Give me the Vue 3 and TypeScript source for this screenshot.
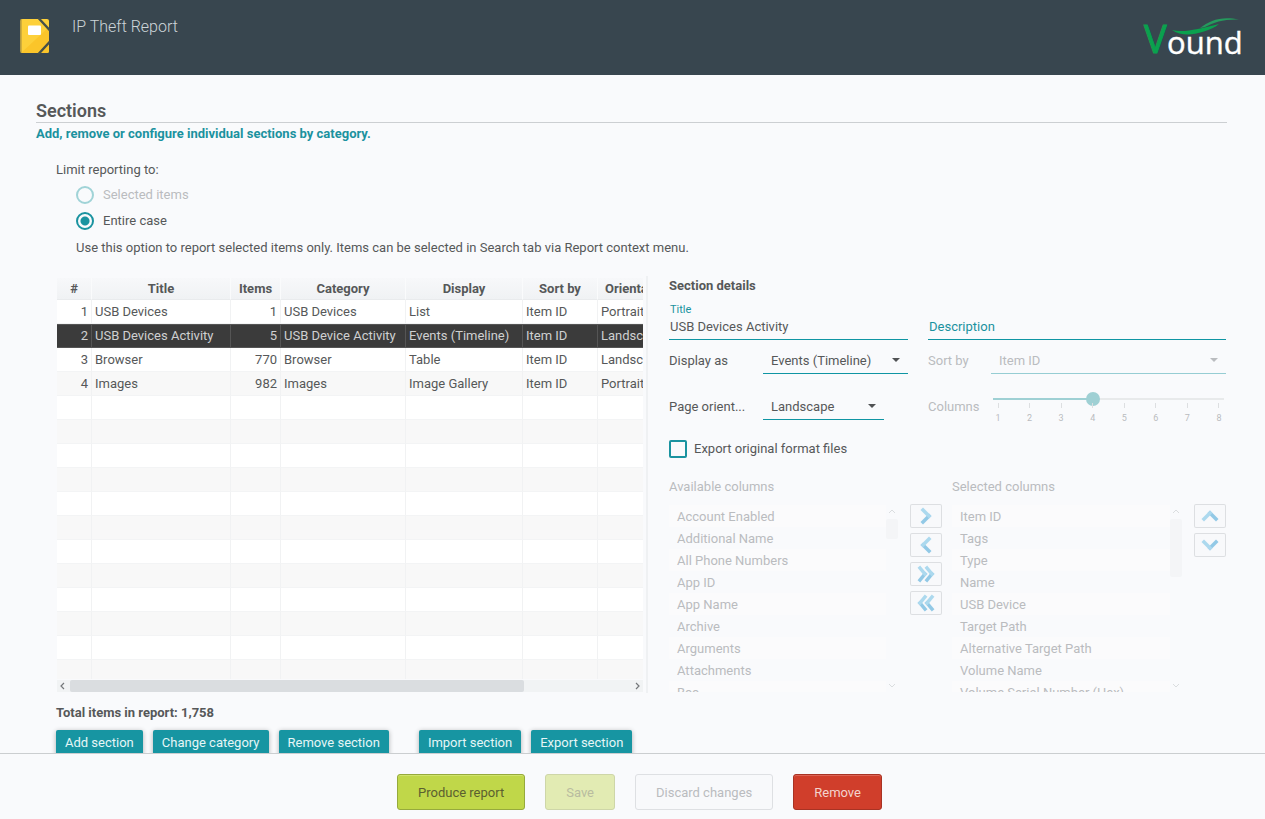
<script setup lang="ts">
import { ref, computed } from 'vue'

interface Section {
  title: string
  items: number
  category: string
  display: string
  sortBy: string
  orientation: string
}

const sections: Section[] = [
  { title: 'USB Devices', items: 1, category: 'USB Devices', display: 'List', sortBy: 'Item ID', orientation: 'Portrait' },
  { title: 'USB Devices Activity', items: 5, category: 'USB Device Activity', display: 'Events (Timeline)', sortBy: 'Item ID', orientation: 'Landscape' },
  { title: 'Browser', items: 770, category: 'Browser', display: 'Table', sortBy: 'Item ID', orientation: 'Landscape' },
  { title: 'Images', items: 982, category: 'Images', display: 'Image Gallery', sortBy: 'Item ID', orientation: 'Portrait' },
]
const blankRows = 12
const selected = ref(1)
const total = computed(() => sections.reduce((sum, s) => sum + s.items, 0).toLocaleString('en-US'))

const scope = ref('case')
const title = ref('USB Devices Activity')
const description = ref('')
const display = ref('Events (Timeline)')
const orientation = ref('Landscape')
const sortBy = ref('Item ID')
const columns = ref(4)
const exportOriginal = ref(false)

const available = ['Account Enabled', 'Additional Name', 'All Phone Numbers', 'App ID', 'App Name', 'Archive', 'Arguments', 'Attachments', 'Bcc']
const chosen = ['Item ID', 'Tags', 'Type', 'Name', 'USB Device', 'Target Path', 'Alternative Target Path', 'Volume Name', 'Volume Serial Number (Hex)']

const moveButtons = [
  { label: 'Add', light: ['M13 6l6 6'], dark: ['M19 12l-6 6'] },
  { label: 'Remove', light: ['M19 6l-6 6'], dark: ['M13 12l6 6'] },
  { label: 'Add all', light: ['M10 6l5 6', 'M17 6l5 6'], dark: ['M15 12l-5 6', 'M22 12l-5 6'] },
  { label: 'Remove all', light: ['M15 6l-5 6', 'M22 6l-5 6'], dark: ['M10 12l5 6', 'M17 12l5 6'] },
]
const orderButtons = [
  { label: 'Move up', light: ['M10 15l6-6'], dark: ['M16 9l6 6'] },
  { label: 'Move down', light: ['M10 9l6 6'], dark: ['M16 15l6-6'] },
]
</script>

<template>
  <div class="app">
    <header class="topbar">
      <svg class="book" width="30" height="37" viewBox="0 0 30 37" aria-hidden="true">
        <rect x="0.500" y="2" width="28.500" height="34" rx="2" fill="#fdd03a" />
        <path d="M1 36L29 10v24a2 2 0 0 1-2 2z" fill="#fbc52a" />
        <rect x="0.500" y="2" width="1.500" height="34" rx="0.700" fill="#d2ae3c" />
        <path d="M18.500 1L30 13.500M30 24.500L18.500 37" stroke="#46504a" stroke-width="2.400" fill="none" />
        <rect x="8" y="8.500" width="13" height="9.500" rx="1" fill="#fff" />
      </svg>
      <h1 class="app-title">IP Theft Report</h1>
      <svg class="logo" width="100" height="42" viewBox="0 0 100 42" role="img" aria-label="Vound">
        <text x="0" y="36" class="logo-v">V</text>
        <text x="23" y="37" class="logo-rest">ound</text>
        <path d="M28 13C40 16 54 12 75 7C68 13 52 17.500 44 17.500C38 17.500 32 16 28 13z" fill="#0aa14e" />
        <path d="M56 11C66 4 76 -1 95 2.500C80 2 70 5 61 10z" fill="#259a5d" />
      </svg>
    </header>

    <main class="content">
      <h2 class="heading">Sections</h2>
      <p class="subtitle">Add, remove or configure individual sections by category.</p>

      <div class="body">
        <fieldset class="limit">
          <legend>Limit reporting to:</legend>
          <label class="radio off"><input v-model="scope" type="radio" name="scope" value="selected" disabled />Selected items</label>
          <label class="radio"><input v-model="scope" type="radio" name="scope" value="case" />Entire case</label>
          <p class="hint">Use this option to report selected items only. Items can be selected in Search tab via Report context menu.</p>
        </fieldset>

        <div class="panes">
          <section class="left">
            <div class="viewport">
              <table>
                <colgroup>
                  <col class="c-num" /><col class="c-title" /><col class="c-items" /><col class="c-cat" /><col class="c-disp" /><col class="c-sort" /><col class="c-orient" />
                </colgroup>
                <thead>
                  <tr><th>#</th><th>Title</th><th>Items</th><th>Category</th><th>Display</th><th>Sort by</th><th class="start">Orientation</th></tr>
                </thead>
                <tbody>
                  <tr v-for="(s, i) in sections" :key="s.title" :class="{ selected: i === selected }" @click="selected = i">
                    <td class="num">{{ i + 1 }}</td>
                    <td>{{ s.title }}</td>
                    <td class="num">{{ s.items }}</td>
                    <td>{{ s.category }}</td>
                    <td>{{ s.display }}</td>
                    <td>{{ s.sortBy }}</td>
                    <td>{{ s.orientation }}</td>
                  </tr>
                  <tr v-for="n in blankRows" :key="'blank' + n">
                    <td v-for="c in 7" :key="c"></td>
                  </tr>
                </tbody>
              </table>
            </div>
            <div class="hscroll" aria-hidden="true">
              <svg width="13" height="12" viewBox="0 0 13 12"><path d="M7 3l-3 3l3 3" /></svg>
              <div class="htrack"><div class="hthumb"></div></div>
              <svg width="13" height="12" viewBox="0 0 13 12"><path d="M6 3l3 3l-3 3" /></svg>
            </div>
          </section>

          <section class="details">
            <h3>Section details</h3>
            <div class="pair fields">
              <div class="field">
                <label for="f-title">Title</label>
                <input id="f-title" v-model="title" type="text" />
              </div>
              <div class="field">
                <input v-model="description" type="text" placeholder="Description" aria-label="Description" />
              </div>
            </div>

            <div class="pair options">
              <div class="option">
                <label for="f-display">Display as</label>
                <div class="drop">
                  <select id="f-display" v-model="display">
                    <option>Events (Timeline)</option><option>List</option><option>Table</option><option>Image Gallery</option>
                  </select>
                  <svg width="8" height="4" viewBox="0 0 8 4"><path d="M0 0h8L4 4z" /></svg>
                </div>
              </div>
              <div class="option short off">
                <label for="f-sort">Sort by</label>
                <div class="drop">
                  <select id="f-sort" v-model="sortBy" disabled><option>Item ID</option></select>
                  <svg width="8" height="4" viewBox="0 0 8 4"><path d="M0 0h8L4 4z" /></svg>
                </div>
              </div>
              <div class="option">
                <label for="f-orient">Page orient...</label>
                <div class="drop narrow">
                  <select id="f-orient" v-model="orientation"><option>Landscape</option><option>Portrait</option></select>
                  <svg width="8" height="4" viewBox="0 0 8 4"><path d="M0 0h8L4 4z" /></svg>
                </div>
              </div>
              <div class="option short off">
                <label for="f-columns">Columns</label>
                <div class="slider">
                  <input id="f-columns" v-model.number="columns" type="range" min="1" max="8" disabled />
                  <div class="ticks"><span v-for="n in 8" :key="n">{{ n }}</span></div>
                </div>
              </div>
            </div>

            <label class="check"><input v-model="exportOriginal" type="checkbox" />Export original format files</label>

            <div class="lists">
              <div class="list-group">
                <label for="f-available">Available columns</label>
                <div class="list">
                  <select id="f-available" multiple disabled><option v-for="c in available" :key="c">{{ c }}</option></select>
                  <div class="vscroll" aria-hidden="true">
                    <svg width="12" height="14" viewBox="0 0 12 14"><path d="M3 8l3-3l3 3" /></svg>
                    <div class="vthumb small"></div>
                    <svg class="end" width="12" height="14" viewBox="0 0 12 14"><path d="M3 6l3 3l3-3" /></svg>
                  </div>
                </div>
              </div>
              <div class="movers">
                <button v-for="b in moveButtons" :key="b.label" type="button" :aria-label="b.label" disabled>
                  <svg width="32" height="24" viewBox="0 0 32 24">
                    <path v-for="d in b.dark" :key="d" :d="d" class="dark" />
                    <path v-for="d in b.light" :key="d" :d="d" class="light" />
                  </svg>
                </button>
              </div>
              <div class="list-group">
                <label for="f-chosen">Selected columns</label>
                <div class="list">
                  <select id="f-chosen" multiple disabled><option v-for="c in chosen" :key="c">{{ c }}</option></select>
                  <div class="vscroll" aria-hidden="true">
                    <svg width="12" height="14" viewBox="0 0 12 14"><path d="M3 8l3-3l3 3" /></svg>
                    <div class="vthumb"></div>
                    <svg class="end" width="12" height="14" viewBox="0 0 12 14"><path d="M3 6l3 3l3-3" /></svg>
                  </div>
                </div>
              </div>
              <div class="movers">
                <button v-for="b in orderButtons" :key="b.label" type="button" :aria-label="b.label" disabled>
                  <svg width="32" height="24" viewBox="0 0 32 24">
                    <path v-for="d in b.dark" :key="d" :d="d" class="dark" />
                    <path v-for="d in b.light" :key="d" :d="d" class="light" />
                  </svg>
                </button>
              </div>
            </div>
          </section>
        </div>

        <p class="total">Total items in report: {{ total }}</p>
        <div class="actions">
          <div class="group">
            <button type="button">Add section</button>
            <button type="button">Change category</button>
            <button type="button">Remove section</button>
          </div>
          <div class="group">
            <button type="button">Import section</button>
            <button type="button">Export section</button>
          </div>
        </div>
      </div>
    </main>

    <footer class="bottom">
      <button type="button" class="produce">Produce report</button>
      <button type="button" class="save" disabled>Save</button>
      <button type="button" class="discard" disabled>Discard changes</button>
      <button type="button" class="remove">Remove</button>
    </footer>
  </div>
</template>

<style>
body {
  margin: 0;
  background: #f9fafc;
}
</style>

<style scoped>
* {
  box-sizing: border-box;
}
.app {
  display: flex;
  flex-direction: column;
  height: 100vh;
  overflow: hidden;
  font-family: Roboto, 'Liberation Sans', sans-serif;
  font-size: 13px;
  line-height: 20px;
  color: #565859;
}
h1, h2, h3, p, fieldset {
  margin: 0;
  padding: 0;
  border: 0;
}
button, input, select {
  font: inherit;
  color: inherit;
  margin: 0;
}

/* Top bar */
.topbar {
  display: flex;
  flex: none;
  height: 75px;
  padding: 17px 21px 0 20px;
  background: #38464f;
}
.app-title {
  flex: 1;
  margin-left: 22px;
  font-size: 16px;
  font-weight: 300;
  color: #cdd5d9;
}
.logo {
  overflow: visible;
}
.logo text {
  font-family: 'Open Sans', 'Noto Sans', sans-serif;
}
.logo-v {
  font-size: 38px;
  fill: #0aa14e;
  stroke: #0aa14e;
  stroke-width: 1;
}
.logo-rest {
  font-size: 31px;
  fill: #fff;
  stroke: #fff;
  stroke-width: 0.4;
}

/* Main */
.content {
  flex: 1;
  min-height: 0;
  overflow: hidden;
  padding: 25px 38px 0 36px;
}
.heading {
  font-size: 18px;
  line-height: 22px;
  font-weight: 600;
  border-bottom: 1px solid #cccfd2;
}
.subtitle {
  line-height: 22px;
  font-weight: 700;
  color: #1b929f;
}
.body {
  padding: 15px 1px 0 20px;
}
legend {
  padding: 0;
}
.radio {
  display: flex;
  align-items: center;
  gap: 9px;
  height: 26px;
  margin-left: 20px;
}
.limit legend {
  margin-bottom: 2px;
}
.radio input {
  appearance: none;
  width: 18px;
  height: 18px;
  border: 2px solid #1a93a0;
  border-radius: 50%;
}
.radio input:checked {
  background: radial-gradient(circle, #1a93a0 4px, transparent 5px);
}
.radio input:disabled {
  border-color: #a0d3d7;
}
.off {
  color: #babcbf;
}
.hint {
  margin: 4px 0 0 20px;
}
.panes {
  display: grid;
  grid-template-columns: minmax(0, 592fr) minmax(0, 557fr);
  gap: 21px;
  margin-top: 18px;
}

/* Table */
.left {
  height: 417px;
  padding: 2px 3px 0 1px;
  border-right: 2px solid #eff1f3;
}
.viewport {
  height: 401px;
  overflow: hidden;
}
table {
  table-layout: fixed;
  width: 720px;
  border-collapse: separate;
  border-spacing: 0;
}
.c-num { width: 35px; }
.c-title { width: 139px; }
.c-items { width: 50px; }
.c-cat { width: 125px; }
.c-disp { width: 117px; }
.c-sort { width: 75px; }
.c-orient { width: 179px; }
th {
  height: 22px;
  padding: 0;
  font-weight: 700;
  text-align: center;
  background: linear-gradient(#f7f8fa, #f0f2f4);
  border-right: 1px solid #fafbfc;
  border-bottom: 1px solid #e9ebed;
}
th.start {
  padding-left: 7px;
  text-align: left;
}
td {
  height: 24px;
  padding: 0 3px;
  white-space: nowrap;
  background: #fff;
  border-right: 1px solid #f1f2f3;
  border-bottom: 1px solid #f3f4f5;
}
tbody tr:nth-child(even) td {
  background: #f8f8f8;
}
tbody tr.selected td {
  color: #cfd0d1;
  background: #3b3b3b;
  border-right-color: #555;
  border-bottom: 0;
  box-shadow: inset 0 1px #555, inset 0 -1px #555;
}
.num {
  text-align: right;
}
.hscroll {
  display: flex;
  height: 12px;
  margin-top: 1px;
  background: #f1f3f4;
}
.hscroll path {
  fill: none;
  stroke: #74777a;
  stroke-width: 1.2;
}
.htrack {
  flex: 1;
}
.hthumb {
  width: 81%;
  height: 12px;
  border-radius: 2px;
  background: #dadde0;
}

/* Details */
h3 {
  line-height: 20px;
  font-size: 13px;
  font-weight: 700;
}
.pair {
  display: grid;
  grid-template-columns: minmax(0, 239fr) minmax(0, 298fr);
  column-gap: 20px;
}
.fields {
  margin-top: 8px;
  align-items: end;
}
.field label {
  display: block;
  margin-left: 1px;
  font-size: 11px;
  line-height: 12px;
  color: #1b929f;
}
.field input {
  display: block;
  width: 100%;
  height: 24px;
  padding: 0 1px 3px;
  border: 0;
  box-shadow: inset 0 -1px #0f95a3;
  background: transparent;
  outline: 0;
}
.field input::placeholder {
  color: #1b929f;
  opacity: 1;
}
.options {
  row-gap: 19px;
  margin-top: 7px;
}
.option {
  display: grid;
  grid-template-columns: 94px minmax(0, 1fr);
  align-items: center;
  height: 27px;
}
.option.short {
  grid-template-columns: 63px minmax(0, 1fr);
}
.drop {
  position: relative;
}
.drop select {
  appearance: none;
  display: block;
  width: 100%;
  height: 27px;
  padding: 0 24px 0 8px;
  border: 0;
  box-shadow: inset 0 -1px #0f95a3;
  border-radius: 0;
  background: transparent;
}
.drop select:disabled {
  opacity: 1;
  box-shadow: inset 0 -1px #96cdd3;
}
.drop svg {
  position: absolute;
  top: 11px;
  right: 8px;
  fill: #505254;
}
.off .drop svg {
  fill: #babcbf;
}
.narrow {
  width: 121px;
}
.slider {
  height: 27px;
}
.slider input {
  appearance: none;
  display: block;
  width: 100%;
  height: 12px;
  background: transparent;
}
.slider input::-webkit-slider-runnable-track {
  height: 2px;
  background: linear-gradient(90deg, transparent 2px, #9fd0d4 2px, #9fd0d4 43%, #e8eaeb 43%, #e8eaeb calc(100% - 2px), transparent calc(100% - 2px));
}
.slider input::-webkit-slider-thumb {
  appearance: none;
  width: 14px;
  height: 14px;
  margin-top: -6px;
  border-radius: 50%;
  background: #9fd0d4;
}
.ticks {
  display: flex;
  justify-content: space-between;
  padding: 0 2px;
  font-size: 9px;
  line-height: 12px;
}
.ticks span {
  width: 10px;
  text-align: center;
}
.ticks span::before {
  content: '';
  display: block;
  width: 1px;
  height: 5px;
  margin: -2px auto 4px;
  background: #dddfe1;
}
.check {
  display: flex;
  align-items: center;
  gap: 7px;
  height: 20px;
  margin-top: 19px;
}
.check input {
  appearance: none;
  width: 18px;
  height: 18px;
  border: 2px solid #1a93a0;
  border-radius: 2px;
}
.lists {
  display: grid;
  grid-template-columns: minmax(0, 231fr) 32px minmax(0, 232fr) 32px;
  column-gap: 10px;
  margin-top: 18px;
  color: #babcbf;
}
.list-group label {
  display: block;
}
.list {
  display: flex;
  height: 187px;
  margin-top: 8px;
  overflow: hidden;
}
.list select {
  flex: 1;
  min-width: 0;
  height: 198px;
  padding: 0;
  border: 0;
  border-radius: 0;
  background: transparent;
  overflow: hidden;
  opacity: 1;
}
.list option {
  min-height: 22px;
  height: 22px;
  padding: 4px 8px 0;
  color: #babcbf;
}
.list option:nth-child(odd) {
  background: #fbfbfc;
}
.vscroll {
  display: flex;
  flex-direction: column;
  width: 12px;
  margin-right: 2px;
}
.vscroll path {
  fill: none;
  stroke: #dadddf;
}
.vscroll .end {
  margin-top: auto;
}
.vthumb {
  height: 58px;
  border-radius: 2px;
  background: #f4f5f7;
}
.vthumb.small {
  height: 20px;
}
.movers {
  display: flex;
  flex-direction: column;
  gap: 5px;
  padding-top: 27px;
}
.movers button {
  display: flex;
  width: 32px;
  height: 24px;
  padding: 0;
  border: 0;
  border-radius: 2px;
  background: #f8f9fb;
  box-shadow: inset 0 0 0 1px #dddfe2;
}
.movers path {
  fill: none;
  stroke-width: 3.5;
  stroke-linecap: square;
}
.movers .light {
  stroke: #acd9ee;
}
.movers .dark {
  stroke: #92c9e6;
}

/* Actions */
.total {
  margin-top: 10px;
  font-weight: 700;
}
.actions {
  display: flex;
  gap: 30px;
  margin-top: 7px;
}
.group {
  display: flex;
  gap: 10px;
}
.group button {
  height: 26px;
  padding: 0 9px;
  border: 0;
  border-radius: 2px;
  color: #e6f6f7;
  background: #1795a2;
  box-shadow: 0 1px 5px rgba(0, 0, 0, 0.3);
}

/* Footer */
.bottom {
  display: flex;
  flex: none;
  justify-content: center;
  gap: 20px;
  height: 66px;
  padding: 20px 0 0 14px;
  border-top: 1px solid #cbced0;
}
.bottom button {
  height: 36px;
  padding: 1px 20px 0;
  border: 1px solid;
  border-radius: 3px;
}
.bottom .produce {
  color: #5b6030;
  background: #c0d749;
  border-color: #96aa3c;
  box-shadow: inset 0 1px #d0e36c;
}
.bottom .save {
  color: #b9bca0;
  background: #e2ebb3;
  border-color: #ced6a8;
}
.bottom .discard {
  color: #babcbf;
  background: #f8f9fb;
  border-color: #dee0e3;
}
.bottom .remove {
  color: #f3d3ce;
  background: #d03e2b;
  border-color: #a83324;
  box-shadow: inset 0 1px #dc6455;
}
</style>
